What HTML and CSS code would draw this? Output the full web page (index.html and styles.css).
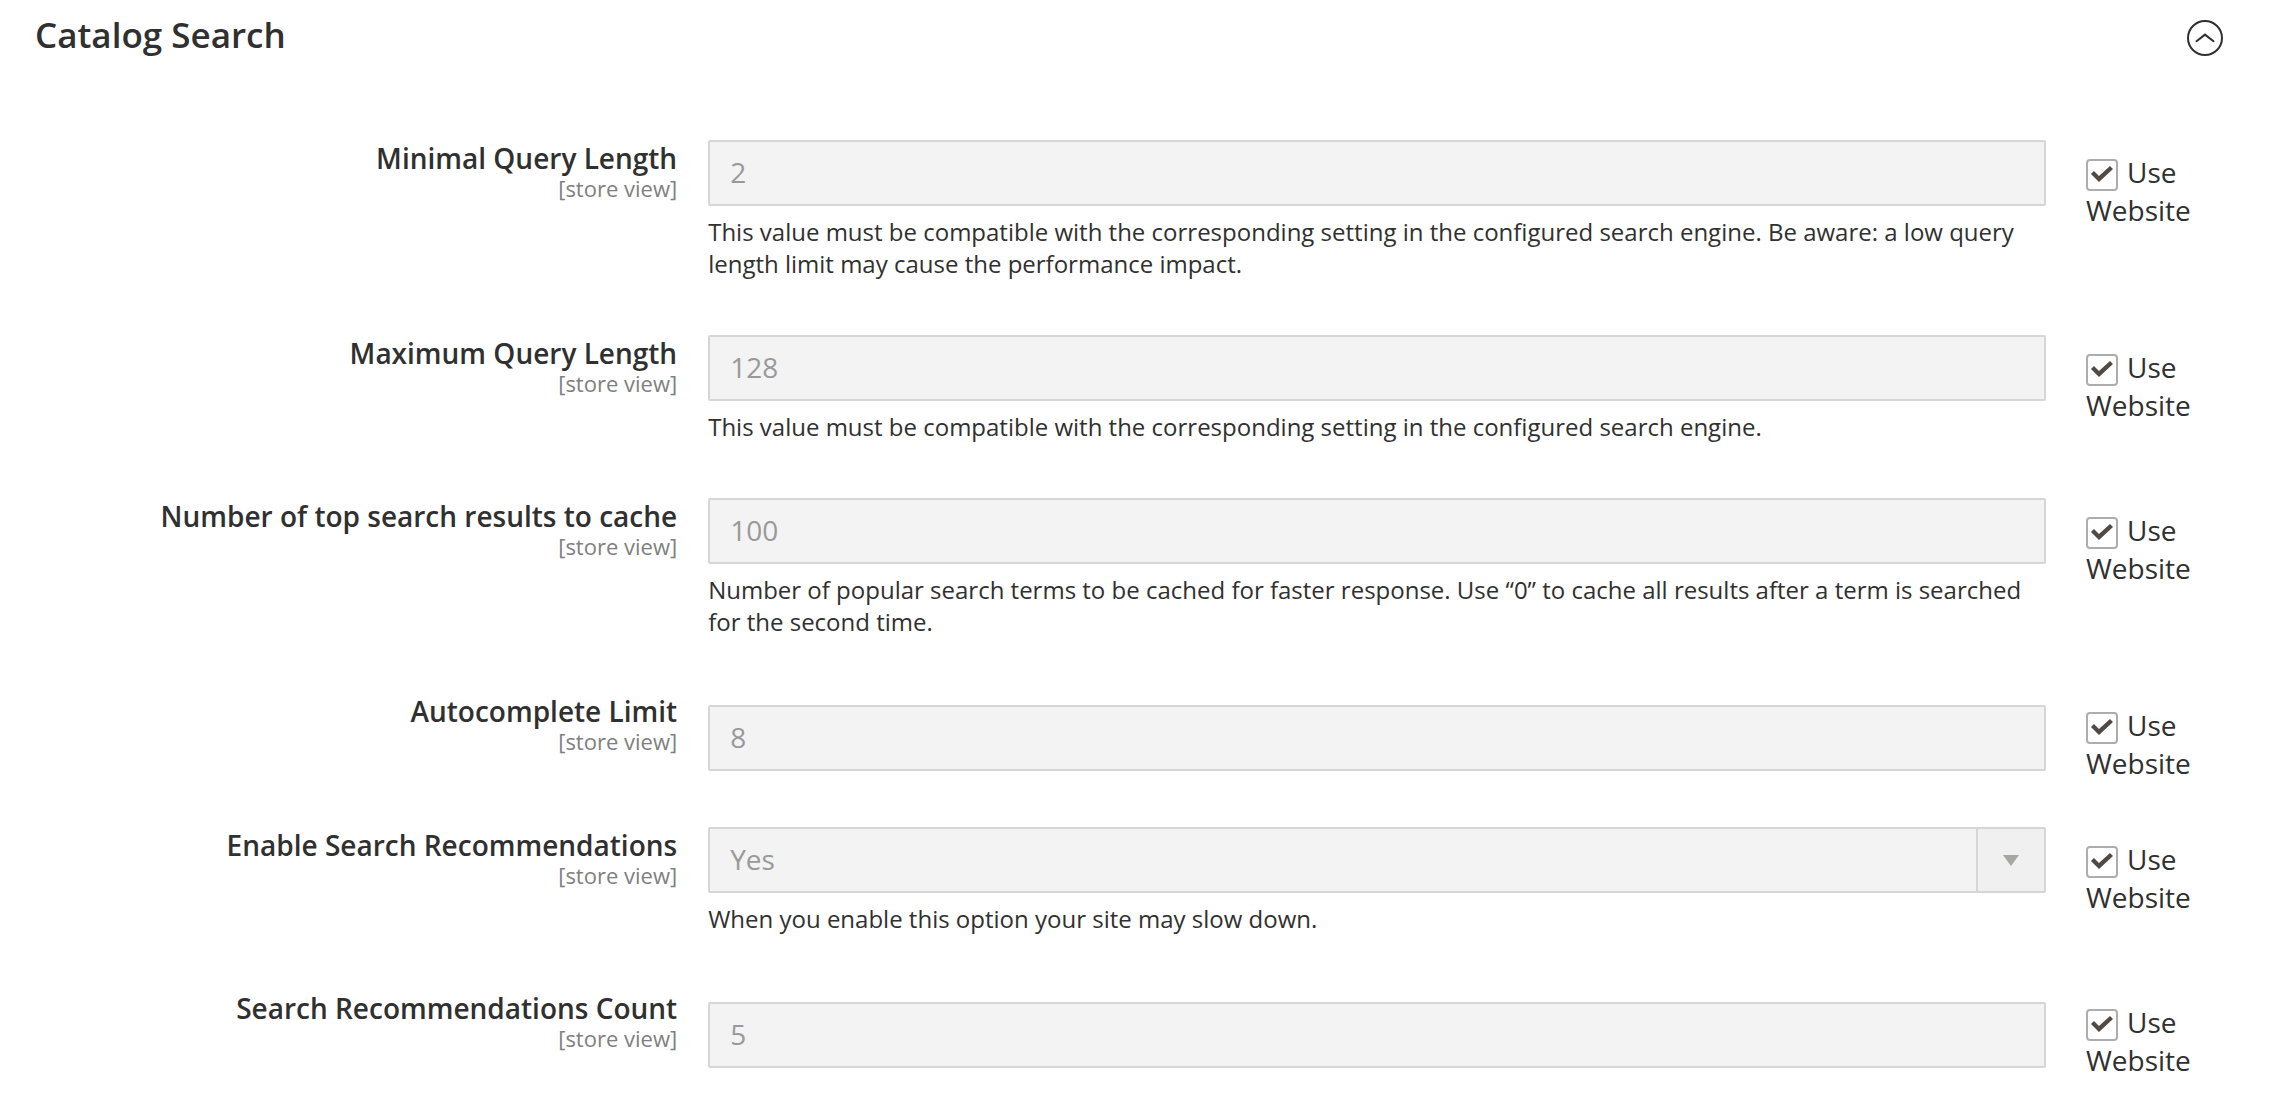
FILE: index.html
```html
<!DOCTYPE html>
<html lang="en">
<head>
    <meta charset="utf-8">
    <title>Catalog Search</title>
    <link rel="stylesheet" href="styles.css">
</head>
<body>
    <section class="config-section">
        <div class="section-header">
            <h2>Catalog Search</h2>
            <button type="button" class="collapse-button" aria-label="Collapse section">
                <svg viewBox="0 0 36 36" width="36" height="36" fill="none" stroke="#303030" stroke-width="2">
                    <circle cx="18" cy="18" r="17"/>
                    <path d="M9.5 21.2L18 14.6l8.5 6.6" stroke-linecap="round"/>
                </svg>
            </button>
        </div>

        <form class="config-form">
            <div class="row">
                <label class="row-label" for="minQueryLength">Minimal Query Length <span class="scope">[store view]</span></label>
                <div class="value">
                    <input type="text" class="control" id="minQueryLength" value="2" disabled>
                    <p class="note">This value must be compatible with the corresponding setting in the configured search engine. Be aware: a low query length limit may cause the performance impact.</p>
                </div>
                <label class="use-default"><input type="checkbox" class="checkbox" checked>Use Website</label>
            </div>

            <div class="row">
                <label class="row-label" for="maxQueryLength">Maximum Query Length <span class="scope">[store view]</span></label>
                <div class="value">
                    <input type="text" class="control" id="maxQueryLength" value="128" disabled>
                    <p class="note">This value must be compatible with the corresponding setting in the configured search engine.</p>
                </div>
                <label class="use-default"><input type="checkbox" class="checkbox" checked>Use Website</label>
            </div>

            <div class="row">
                <label class="row-label" for="cacheCount">Number of top search results to cache <span class="scope">[store view]</span></label>
                <div class="value">
                    <input type="text" class="control" id="cacheCount" value="100" disabled>
                    <p class="note">Number of popular search terms to be cached for faster response. Use “0” to cache all results after a term is searched for the second time.</p>
                </div>
                <label class="use-default"><input type="checkbox" class="checkbox" checked>Use Website</label>
            </div>

            <div class="row">
                <label class="row-label" for="autocompleteLimit">Autocomplete Limit <span class="scope">[store view]</span></label>
                <div class="value no-note">
                    <input type="text" class="control" id="autocompleteLimit" value="8" disabled>
                </div>
                <label class="use-default"><input type="checkbox" class="checkbox" checked>Use Website</label>
            </div>

            <div class="row">
                <label class="row-label" for="enableRecommendations">Enable Search Recommendations <span class="scope">[store view]</span></label>
                <div class="value">
                    <div class="select-wrap">
                        <select class="control" id="enableRecommendations" disabled>
                            <option selected>Yes</option>
                            <option>No</option>
                        </select>
                        <span class="select-arrow">
                            <svg viewBox="0 0 16 11" width="16" height="11"><path d="M0 0h16L8 11z" fill="#a8a6a2"/></svg>
                        </span>
                    </div>
                    <p class="note">When you enable this option your site may slow down.</p>
                </div>
                <label class="use-default"><input type="checkbox" class="checkbox" checked>Use Website</label>
            </div>

            <div class="row">
                <label class="row-label" for="recommendationsCount">Search Recommendations Count <span class="scope">[store view]</span></label>
                <div class="value no-note">
                    <input type="text" class="control" id="recommendationsCount" value="5" disabled>
                </div>
                <label class="use-default"><input type="checkbox" class="checkbox" checked>Use Website</label>
            </div>
        </form>
    </section>
</body>
</html>
```

FILE: styles.css
```css
* {
    box-sizing: border-box;
}

body {
    margin: 0;
    background-color: #fff;
    color: #303030;
    font-family: "Open Sans", sans-serif;
    font-size: 28px;
    line-height: 38px;
}

.config-section {
    padding: 12px 71px 0 35px;
}

.section-header {
    display: flex;
    justify-content: space-between;
    align-items: flex-start;
    margin-bottom: 82px;
}

h2 {
    margin: 0;
    font-size: 35px;
    font-weight: 600;
    line-height: 46px;
}

.collapse-button {
    display: flex;
    margin: 8px 0 0;
    padding: 0;
    border: none;
    background: none;
    cursor: pointer;
}

/* label | field | use website */
.row {
    display: grid;
    grid-template-columns: minmax(0, 12fr) minmax(0, 25fr) 146px;
    column-gap: 31px;
    padding-bottom: 45px;
}

.row:last-child {
    padding-bottom: 0;
}

.row-label {
    font-weight: 600;
    line-height: 36px;
    text-align: right;
}

.scope {
    display: block;
    color: #808080;
    font-size: 22px;
    font-weight: 400;
    line-height: 24px;
}

.no-note {
    padding-top: 12px;
}

.control {
    display: block;
    width: 100%;
    height: 66px;
    margin: 0;
    padding: 0 20px 2px;
    border: 2px solid #d6d6d6;
    border-radius: 2px;
    background-color: #f3f3f3;
    color: #999;
    font-family: inherit;
    font-size: 28px;
    opacity: 1;
    appearance: none;
}

.select-wrap {
    position: relative;
}

.select-arrow {
    position: absolute;
    top: 2px;
    right: 2px;
    bottom: 2px;
    display: flex;
    align-items: center;
    justify-content: center;
    width: 68px;
    border-left: 2px solid #d6d6d6;
    background-color: #f0f0f0;
    pointer-events: none;
}

.note {
    margin: 10px 0;
    font-size: 24px;
    line-height: 32px;
}

.use-default {
    padding: 13px 0 0 9px;
}

.checkbox {
    width: 32px;
    height: 32px;
    margin: 0 9px 0 0;
    border: 2px solid #adadad;
    border-radius: 4px;
    background-color: #fff;
    vertical-align: -8px;
    appearance: none;
}

.checkbox:checked::before {
    content: "";
    display: block;
    width: 28px;
    height: 28px;
    background-color: #514943;
    clip-path: polygon(3px 13px, 6px 10px, 11px 15px, 22px 5px, 25px 8px, 11px 21px);
}
```
